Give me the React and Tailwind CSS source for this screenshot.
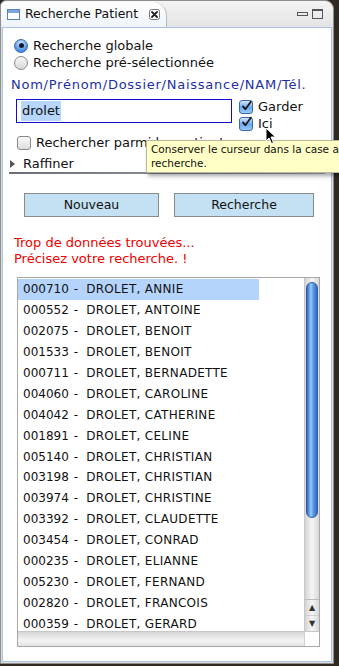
import React from 'react';

const patients = [
  ['000710', 'DROLET, ANNIE'],
  ['000552', 'DROLET, ANTOINE'],
  ['002075', 'DROLET, BENOIT'],
  ['001533', 'DROLET, BENOIT'],
  ['000711', 'DROLET, BERNADETTE'],
  ['004060', 'DROLET, CAROLINE'],
  ['004042', 'DROLET, CATHERINE'],
  ['001891', 'DROLET, CELINE'],
  ['005140', 'DROLET, CHRISTIAN'],
  ['003198', 'DROLET, CHRISTIAN'],
  ['003974', 'DROLET, CHRISTINE'],
  ['003392', 'DROLET, CLAUDETTE'],
  ['003454', 'DROLET, CONRAD'],
  ['000235', 'DROLET, ELIANNE'],
  ['005230', 'DROLET, FERNAND'],
  ['002820', 'DROLET, FRANCOIS'],
  ['000359', 'DROLET, GERARD'],
];

const Radio = ({ checked }) => (
  <span
    className={`w-[14px] h-[14px] rounded-full border flex items-center justify-center shrink-0 ${
      checked
        ? 'border-[#3a6ab0] bg-[radial-gradient(circle_at_50%_30%,#d8ecff,#5a9ae6_60%,#2f6fc8)]'
        : 'border-[#8a8a8a] bg-[linear-gradient(#f6f6f6,#d8d8d8)]'
    }`}
  >
    {checked && <span className="w-[5px] h-[5px] rounded-full bg-[#1a1a2e]" />}
  </span>
);

const Check = ({ checked }) => (
  <span
    className={`w-[14px] h-[14px] rounded-[3px] border flex items-center justify-center shrink-0 ${
      checked
        ? 'border-[#3a6ab0] bg-[linear-gradient(#cfe6ff,#6aa8ef_55%,#9ccaf8)]'
        : 'border-[#8a8a8a] bg-[linear-gradient(#fafafa,#dcdcdc)]'
    }`}
  >
    {checked && (
      <svg width="14" height="14" viewBox="0 0 14 14" className="-mt-[3px] ml-[1px]">
        <path d="M2.5 7.5 L5.5 11 L12.5 1.5" fill="none" stroke="#111" strokeWidth="2.2" strokeLinecap="round" strokeLinejoin="round" />
      </svg>
    )}
  </span>
);

export default function App() {
  return (
    <div className="w-[339px] h-[666px] bg-[#2e2a22] overflow-hidden font-['DejaVu_Sans',sans-serif] text-[#111]">
      <div className="w-[334px] h-[664px] bg-[#dedede] border border-[#8e8e8e] rounded-tl-[6px] rounded-tr-[9px] flex flex-col">
        {/* en-tête de la vue */}
        <div className="h-[26px] flex items-end bg-[linear-gradient(#f4f4f4,#e4e4e4)] rounded-tl-[6px] rounded-tr-[9px]">
          <div className="w-[166px] h-[25px] bg-[linear-gradient(#ffffff,#eef4fb)] rounded-tl-[5px] rounded-tr-[14px] border-r border-[#b8b8b8] flex items-center pl-[6px] gap-[5px]">
            <span className="w-[13px] h-[11px] border border-[#5a7fb0] bg-white flex flex-col">
              <span className="h-[3px] bg-[#7fa6d8]" />
            </span>
            <span className="text-[12.5px] leading-none">Recherche Patient</span>
            <svg className="ml-[6px]" width="11" height="11" viewBox="0 0 11 11">
              <rect x="0.5" y="0.5" width="10" height="10" rx="2" fill="#fff" stroke="#777" />
              <path d="M3 3 L8 8 M8 3 L3 8" stroke="#222" strokeWidth="1.8" strokeLinecap="round" />
            </svg>
          </div>
          <div className="flex-1 h-full flex items-center justify-end gap-[4px] pr-[10px]">
            <span className="w-[11px] h-[4px] border border-[#555]" />
            <span className="w-[11px] h-[10px] border border-[#555] border-t-2" />
          </div>
        </div>

        {/* panneau */}
        <div className="relative flex-1 mx-[1px] mb-[1px] bg-white border border-[#a9c3e6] flex flex-col">
          <div className="pl-[11px] pt-[9px] flex flex-col text-[13px]">
            <div className="h-[17px] flex items-center gap-[5px]">
              <Radio checked />
              <span>Recherche globale</span>
            </div>
            <div className="h-[17px] flex items-center gap-[5px]">
              <Radio />
              <span>Recherche pré-sélectionnée</span>
            </div>
          </div>

          <div className="pl-[8px] mt-[6px] h-[16px] text-[13px] tracking-[0.75px] text-[#1c2fa6] leading-[16px] whitespace-nowrap">
            Nom/Prénom/Dossier/Naissance/NAM/Tél.
          </div>

          <div className="flex pl-[13px] mt-[6px]">
            <div className="w-[216px] h-[24px] border border-[#1010c8] flex items-center pl-[4px] text-[13px]">
              <span className="bg-[#b6d6fc] px-[1px]">drolet</span>
            </div>
            <div className="ml-[7px] flex flex-col text-[13px]">
              <div className="h-[16px] flex items-center gap-[5px]">
                <Check checked />
                <span>Garder</span>
              </div>
              <div className="h-[17px] flex items-center gap-[5px]">
                <Check checked />
                <span>Ici</span>
              </div>
            </div>
          </div>

          <div className="pl-[14px] mt-[3px] h-[16px] flex items-center gap-[5px] text-[13px]">
            <Check />
            <span>Rechercher parmi les patients</span>
          </div>

          <div className="pl-[7px] mt-[4px] h-[17px] flex items-center gap-[8px] text-[13px]">
            <span className="w-0 h-0 border-y-[4px] border-y-transparent border-l-[5px] border-l-[#555]" />
            <span>Raffiner</span>
          </div>

          <div className="mx-[6px] h-[2px] bg-[linear-gradient(90deg,#6a6e78,#8e929a_60%,#b0b4bb)]" />

          <div className="flex pl-[21px] gap-[15px] mt-[19px] text-[12.5px]">
            <div className="w-[135px] h-[24px] border border-[#8a8a8a] bg-[#c3e1f3] flex items-center justify-center">
              Nouveau
            </div>
            <div className="w-[140px] h-[24px] border border-[#8a8a8a] bg-[#c3e1f3] flex items-center justify-center">
              Recherche
            </div>
          </div>

          <div className="pl-[11px] mt-[18px] text-[13px] leading-[16px] text-[#f00000]">
            <div>Trop de données trouvées...</div>
            <div>Précisez votre recherche. !</div>
          </div>

          {/* liste */}
          <div className="ml-[14px] mt-[10px] w-[303px] h-[370px] border border-[#a8a8a8] flex flex-col">
            <div className="flex flex-1 min-h-0">
              <div className="flex-1 overflow-hidden pt-[1px]">
                {patients.map(([no, nom], i) => (
                  <div
                    key={no + i}
                    className={`h-[20.9px] flex items-center pl-[5px] text-[12px] whitespace-nowrap ${i === 0 ? 'bg-[#b5d4fc] w-[241px]' : ''}`}
                  >
                    <span>{no}</span>
                    <span className="ml-[5px] mr-[8px]">-</span>
                    <span className="tracking-[0.3px]">{nom}</span>
                  </div>
                ))}
              </div>
              <div className="w-[15px] bg-[linear-gradient(90deg,#d4d4d4,#f6f6f6_50%,#d8d8d8)] border-l border-[#c8c8c8] flex flex-col">
                <div className="mt-[4px] mx-[1px] h-[236px] rounded-full border border-[#2f5fa8] bg-[linear-gradient(90deg,#2f68c4,#9cc8f8_40%,#5f9de8_60%,#2f68c4)]" />
                <div className="flex-1" />
                <div className="h-[32px] border-t border-[#bcbcbc] flex flex-col text-[8px] text-[#333] leading-none">
                  <div className="h-[16px] flex items-center justify-center">▲</div>
                  <div className="h-[16px] flex items-center justify-center border-t border-[#cfcfcf]">▼</div>
                </div>
              </div>
            </div>
            <div className="h-[15px] flex border-t border-[#c8c8c8]">
              <div className="flex-1 bg-[linear-gradient(#d6d6d6,#f4f4f4_60%,#e2e2e2)]" />
              <div className="w-[15px] bg-white border-l border-[#d0d0d0]" />
            </div>
          </div>

          {/* infobulle */}
          <div className="absolute left-[143px] top-[112px] w-[215px] h-[33px] bg-[#ffffc6] border border-[#b8b8a0] shadow-[2px_3px_4px_rgba(0,0,0,0.35)] pl-[4px] pt-[1px] text-[10.5px] leading-[14px] whitespace-nowrap overflow-hidden">
            <div>Conserver le curseur dans la case après</div>
            <div>recherche.</div>
          </div>

          {/* curseur */}
          <svg className="absolute left-[262px] top-[99px]" width="12" height="18" viewBox="0 0 12 18">
            <path d="M1 1 L1 14 L4 11 L6.5 16.5 L8.5 15.5 L6 10 L10.5 10 Z" fill="#000" stroke="#fff" strokeWidth="1" />
          </svg>
        </div>
      </div>
    </div>
  );
}
